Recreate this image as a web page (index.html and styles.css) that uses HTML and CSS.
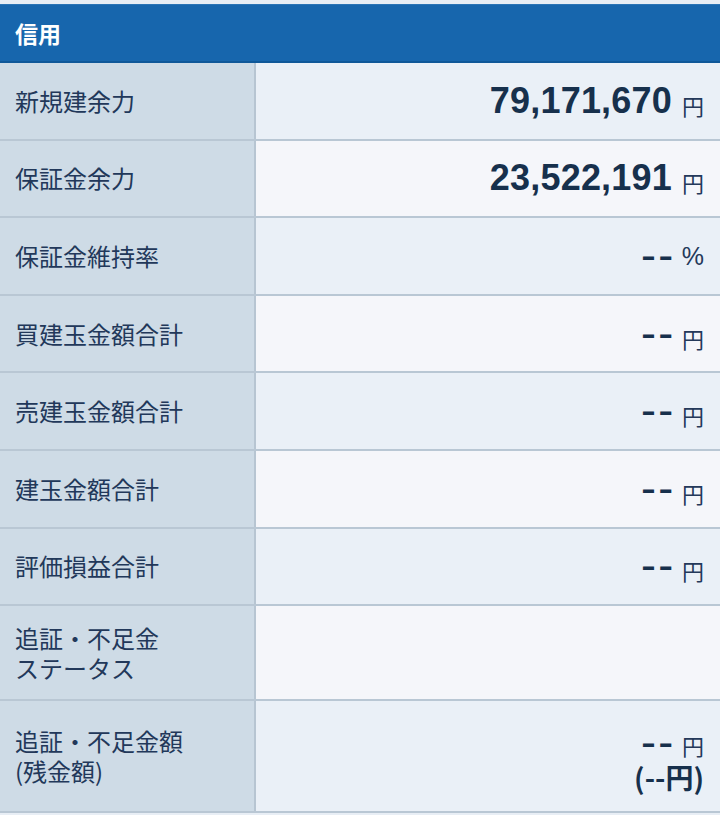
FILE: index.html
```html
<!DOCTYPE html>
<html lang="ja">
<head>
<meta charset="utf-8">
<link rel="stylesheet" href="styles.css">
</head>
<body>
<div class="page">
  <div class="header">信用</div>
  <div class="table">
    <div class="row odd">
      <div class="label">新規建余力</div>
      <div class="value"><span class="num">79,171,670</span><span class="unit">円</span></div>
    </div>
    <div class="row even">
      <div class="label">保証金余力</div>
      <div class="value"><span class="num">23,522,191</span><span class="unit">円</span></div>
    </div>
    <div class="row odd">
      <div class="label">保証金維持率</div>
      <div class="value"><span class="dash">--</span><span class="unit pct">%</span></div>
    </div>
    <div class="row even">
      <div class="label">買建玉金額合計</div>
      <div class="value"><span class="dash">--</span><span class="unit">円</span></div>
    </div>
    <div class="row odd">
      <div class="label">売建玉金額合計</div>
      <div class="value"><span class="dash">--</span><span class="unit">円</span></div>
    </div>
    <div class="row even">
      <div class="label">建玉金額合計</div>
      <div class="value"><span class="dash">--</span><span class="unit">円</span></div>
    </div>
    <div class="row odd">
      <div class="label">評価損益合計</div>
      <div class="value"><span class="dash">--</span><span class="unit">円</span></div>
    </div>
    <div class="row even tall">
      <div class="label">追証・不足金<br>ステータス</div>
      <div class="value"></div>
    </div>
    <div class="row odd taller">
      <div class="label">追証・不足金額<br>(残金額)</div>
      <div class="value stack">
        <div class="line"><span class="dash">--</span><span class="unit">円</span></div>
        <div class="line sub">(--円)</div>
      </div>
    </div>
  </div>
</div>
</body>
</html>
```
FILE: styles.css
```css
html, body {
  margin: 0;
  padding: 0;
  background: #e8eef5;
}
body {
  font-family: "Noto Sans CJK JP", "Noto Sans", sans-serif;
  color: #1d3450;
}
.page {
  padding-top: 4px;
  width: 720px;
}
.header {
  height: 56px;
  background: #1766ad;
  border-top: 1px solid #2a74b6;
  border-bottom: 2px solid #0f5899;
  color: #ffffff;
  font-weight: 700;
  font-size: 23px;
  line-height: 56px;
  padding-left: 15px;
}
.table {
  display: flex;
  flex-direction: column;
}
.row {
  display: grid;
  grid-template-columns: 256px 1fr;
  height: 77.6px;
  box-sizing: border-box;
  border-bottom: 2px solid #b9c7d4;
}
.row.tall { height: 95px; }
.row.taller { height: 112px; }
.label {
  background: #cedbe6;
  border-right: 2px solid #b7c5d2;
  display: flex;
  align-items: center;
  padding-left: 15px;
  font-size: 24px;
  line-height: 30px;
  color: #22385a;
}
.odd .value { background: #eaf0f7; }
.even .value { background: #f5f6fa; }
.value {
  display: flex;
  align-items: center;
  justify-content: flex-end;
  padding-right: 16px;
}
.num {
  font-family: "Liberation Sans", Arial, sans-serif;
  font-weight: 700;
  font-size: 36px;
  color: #17304c;
  letter-spacing: 0.2px;
  margin-right: 4px;
}
.dash {
  font-family: "Liberation Sans", Arial, sans-serif;
  font-weight: 700;
  font-size: 30px;
  letter-spacing: 2px;
  color: #17304c;
  transform: scaleX(1.45);
  transform-origin: right center;
  display: inline-block;
}
.unit {
  font-size: 22px;
  margin-left: 6px;
  margin-top: 8px;
  color: #24395a;
}
.unit.pct {
  font-family: "Liberation Sans", Arial, sans-serif;
  font-size: 25px;
  margin-top: 2px;
}
.value.stack {
  flex-direction: column;
  align-items: flex-end;
  justify-content: center;
  padding-top: 8px;
}
.line {
  display: flex;
  align-items: center;
  height: 34px;
  line-height: 34px;
}
.line .unit { margin-top: 4px; }
.sub {
  font-weight: 700;
  font-size: 28px;
  color: #17304c;
}
```
